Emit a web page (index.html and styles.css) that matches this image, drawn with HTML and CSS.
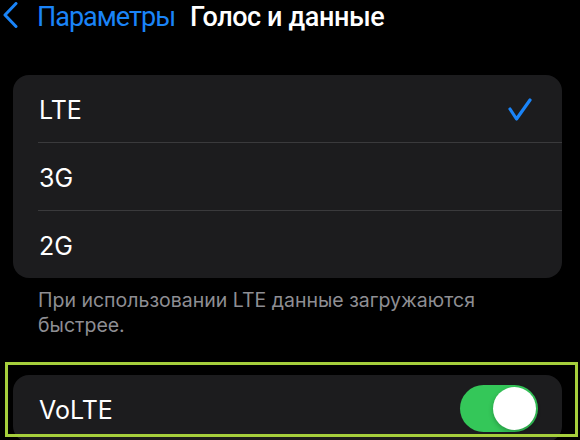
FILE: index.html
```html
<!DOCTYPE html>
<html>
   <head>
      <title>Голос и данные</title>
      <link rel="stylesheet" href="styles.css">
   </head>
   <body>
      <header class="nav">
         <a class="nav-back" href="#">
            <svg class="nav-chevron" width="16" height="26" viewBox="0 0 16 26">
               <polyline points="13,1.5 2,13 13,24.5" fill="none" stroke="#1a84f8" stroke-width="3" stroke-linecap="round" stroke-linejoin="round" />
            </svg>
            <span>Параметры</span>
         </a>
         <h1 class="nav-title">Голос и данные</h1>
      </header>
      <main class="content">
         <ul class="group">
            <li class="row">
               <span class="row-label">LTE</span>
               <svg class="check" width="26" height="26" viewBox="0 0 26 26">
                  <polyline points="3,12 9.5,22 23,3" fill="none" stroke="#1a84f8" stroke-width="3.2" stroke-linecap="round" stroke-linejoin="round" />
               </svg>
            </li>
            <li class="row">
               <span class="row-label">3G</span>
            </li>
            <li class="row">
               <span class="row-label">2G</span>
            </li>
         </ul>
         <p class="footnote">При использовании LTE данные загружаются быстрее.</p>
         <section class="highlight-area">
            <ul class="group">
               <li class="row">
                  <span class="row-label">VoLTE</span>
                  <span class="switch switch-on"><span class="switch-knob"></span></span>
               </li>
            </ul>
            <div class="highlight"></div>
         </section>
      </main>
   </body>
</html>
```
FILE: styles.css
```css
html, body {
   margin: 0;
   padding: 0;
   background: #000;
   overflow: hidden;
}
body {
   width: 580px;
   height: 440px;
   font-family: Inter, "Noto Sans", sans-serif;
   color: #fff;
}
.nav {
   display: flex;
   align-items: center;
   height: 30px;
   padding-left: 3px;
   font-family: Roboto, Inter, sans-serif;
}
.nav-back {
   display: flex;
   align-items: center;
   color: #1a84f8;
   text-decoration: none;
   font-size: 27px;
   letter-spacing: -1px;
}
.nav-chevron {
   margin-right: 18px;
}
.nav-back span {
   padding-top: 3px;
}
.nav-title {
   margin: 0 0 0 15px;
   padding-top: 3px;
   font-size: 27px;
   font-weight: 500;
   letter-spacing: -0.4px;
}
.content {
   padding: 45px 18px 0 13px;
}
.group {
   list-style: none;
   margin: 0;
   padding: 0;
   background: #1c1c1e;
   border-radius: 16px;
   overflow: hidden;
}
.row {
   display: flex;
   align-items: center;
   justify-content: space-between;
   height: 67px;
   margin-left: 25px;
   padding-right: 29px;
   border-bottom: 1px solid #3a3a3c;
   font-size: 25px;
}
.row:last-child {
   border-bottom: none;
}
.row-label {
   margin-left: 1px;
   padding-top: 2px;
}
.check {
   margin-top: 2px;
}
.footnote {
   margin: 10px 60px 0 25px;
   font-size: 19.5px;
   line-height: 25px;
   color: #8e8e93;
}
.highlight-area {
   position: relative;
   margin-top: 37px;
}
.highlight-area .row {
   padding-right: 24px;
}
.switch {
   display: flex;
   align-items: center;
   width: 78px;
   height: 47px;
   border-radius: 24px;
   background: #34c759;
}
.switch-on {
   justify-content: flex-end;
}
.switch-knob {
   width: 43px;
   height: 43px;
   margin-right: 2px;
   border-radius: 50%;
   background: #fff;
   box-shadow: 0 2px 5px rgba(0, 0, 0, 0.25);
}
.highlight {
   position: absolute;
   left: -8px;
   right: -16px;
   top: -13px;
   height: 69px;
   border: 3px solid #a6cf3c;
}
```
